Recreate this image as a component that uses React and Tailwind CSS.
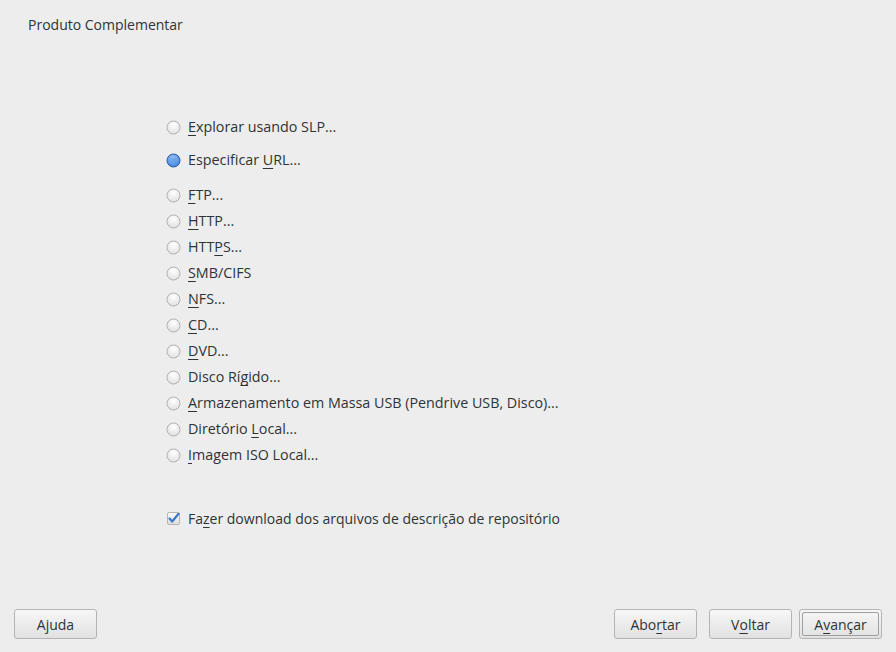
import React from "react";

function Radio({ checked }) {
  return (
    <svg width="15" height="15" viewBox="0 0 15 15" className="shrink-0">
      <defs>
        <radialGradient id="rg1" cx="0.5" cy="0.3" r="0.75">
          <stop offset="0" stopColor="#ffffff" />
          <stop offset="1" stopColor="#dedede" />
        </radialGradient>
        <radialGradient id="rg2" cx="0.45" cy="0.35" r="0.7">
          <stop offset="0" stopColor="#a8cbf5" />
          <stop offset="0.6" stopColor="#5f9ae6" />
          <stop offset="1" stopColor="#3e7cd6" />
        </radialGradient>
      </defs>
      {checked ? (
        <>
          <circle cx="7.5" cy="7.5" r="6.5" fill="url(#rg2)" stroke="#2d5fa8" strokeWidth="1" />
          <circle cx="7.5" cy="7.5" r="3" fill="#5a97ea" opacity="0.6" />
        </>
      ) : (
        <circle cx="7.5" cy="7.5" r="6.5" fill="url(#rg1)" stroke="#b2b2b2" strokeWidth="1" />
      )}
    </svg>
  );
}

function U({ children }) {
  return <span className="underline decoration-1 underline-offset-[3px]">{children}</span>;
}

function Row({ checked, children, className = "" }) {
  return (
    <div className={"flex items-center h-[26px] gap-[7px] " + className}>
      <Radio checked={checked} />
      <span>{children}</span>
    </div>
  );
}

function Btn({ children, def, className = "" }) {
  return (
    <div
      className={
        "w-[83px] h-[30px] rounded-[3px] border border-[#b4b4b4] bg-gradient-to-b from-[#f7f7f7] to-[#e1e1e1] flex items-center justify-center text-[14px] text-[#2e3436] " +
        (def ? "p-[2px] " : "") +
        className
      }
    >
      {def ? (
        <div className="w-full h-full border border-[#a0a0a0] rounded-[2px] flex items-center justify-center">
          {children}
        </div>
      ) : (
        children
      )}
    </div>
  );
}

export default function App() {
  return (
    <div
      className="w-[896px] h-[652px] bg-[#ededed] flex flex-col text-[#2e3436] text-[14.3px]"
      style={{ fontFamily: '"Open Sans", "Noto Sans", sans-serif' }}
    >
      <div className="pl-[28px] pt-[16px] leading-[18px] text-[14px]">Produto Complementar</div>

      <div className="flex-1 pl-[166px] mt-[80px] flex flex-col">
        <Row><U>E</U>xplorar usando SLP...</Row>
        <Row checked className="mt-[7px]">Especificar <U>U</U>RL...</Row>
        <Row className="mt-[9px]"><U>F</U>TP...</Row>
        <Row><U>H</U>TTP...</Row>
        <Row>HTT<U>P</U>S...</Row>
        <Row><U>S</U>MB/CIFS</Row>
        <Row><U>N</U>FS...</Row>
        <Row><U>C</U>D...</Row>
        <Row><U>D</U>VD...</Row>
        <Row>Disco Rí<U>g</U>ido...</Row>
        <Row><U>A</U>rmazenamento em Massa USB (Pendrive USB, Disco)...</Row>
        <Row>Diretório <U>L</U>ocal...</Row>
        <Row><U>I</U>magem ISO Local...</Row>

        <div className="flex items-center h-[26px] gap-[7px] mt-[37px] text-[14px]">
          <svg width="15" height="15" viewBox="0 0 15 15" className="shrink-0">
            <defs>
              <linearGradient id="cb" x1="0" y1="0" x2="0" y2="1">
                <stop offset="0" stopColor="#ffffff" />
                <stop offset="1" stopColor="#dcdcdc" />
              </linearGradient>
            </defs>
            <rect x="1.5" y="1.5" width="12" height="12" rx="1.5" fill="url(#cb)" stroke="#b5b5b5" />
            <path d="M3.5 7.5 L6.2 10.5 L12.5 2.8" fill="none" stroke="#3b78c9" strokeWidth="2.2" strokeLinecap="round" strokeLinejoin="round" />
          </svg>
          <span>Fa<U>z</U>er download dos arquivos de descrição de repositório</span>
        </div>
      </div>

      <div className="flex items-center pl-[14px] pr-[14px] pb-[13px]">
        <Btn>Ajuda</Btn>
        <div className="flex-1" />
        <Btn className="mr-[12px]">Abo<U>r</U>tar</Btn>
        <Btn className="mr-[7px]">V<U>o</U>ltar</Btn>
        <Btn def>A<U>v</U>ançar</Btn>
      </div>
    </div>
  );
}
